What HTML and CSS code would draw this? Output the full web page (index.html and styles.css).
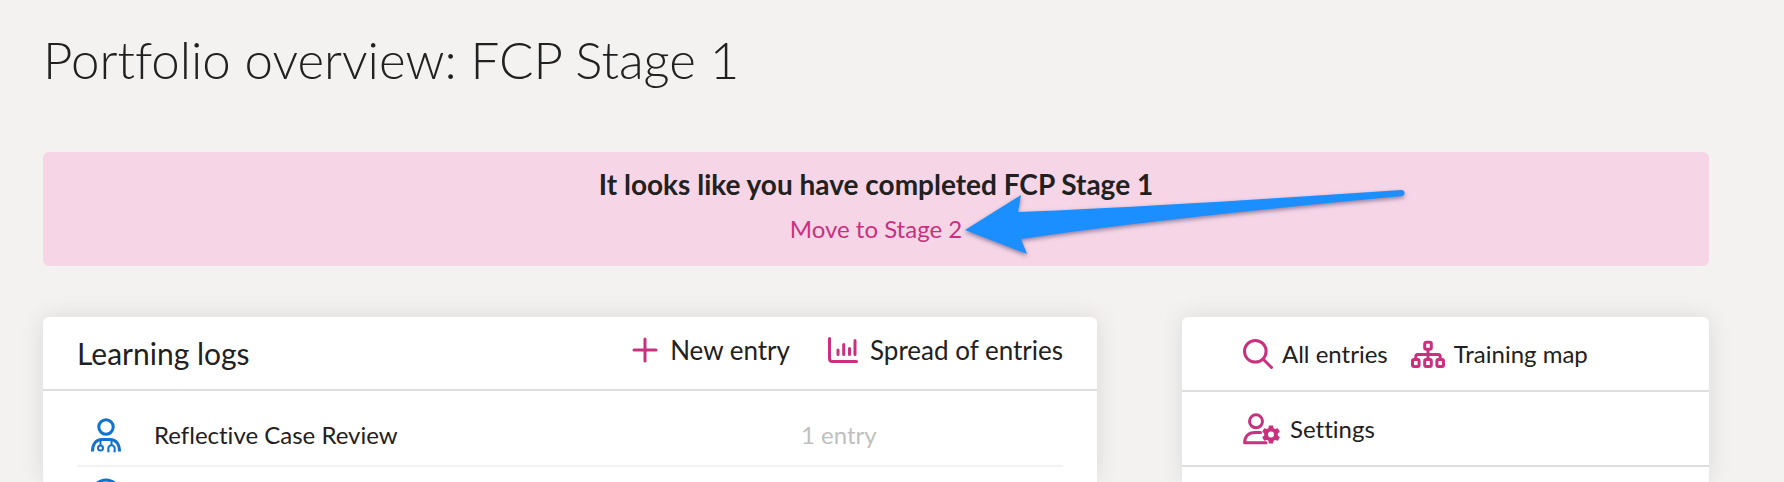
FILE: index.html
```html
<!DOCTYPE html>
<html lang="en">
<head>
<meta charset="utf-8">
<title>Portfolio overview</title>
<link rel="stylesheet" href="styles.css">
</head>
<body>
<main class="page">
  <h1 class="title">Portfolio overview: FCP Stage 1</h1>

  <section class="banner">
    <h2 class="banner-heading">It looks like you have completed FCP Stage 1</h2>
    <div class="banner-action">
      <a class="banner-link" href="#">Move to Stage 2</a>
      <svg class="arrow" width="450" height="80" viewBox="0 0 450 80" aria-hidden="true">
        <path d="M5 45 61 10 58 27Q190 22 441 5A3 3 0 0 1 442 11Q195 34 61 54L67 69Z"/>
      </svg>
    </div>
  </section>

  <div class="columns">
    <section class="card">
      <header class="card-header">
        <h2 class="card-title">Learning logs</h2>
        <nav class="actions">
          <a class="action" href="#">
            <svg class="icon" width="26" height="26" viewBox="0 0 26 26" aria-hidden="true"><path class="line" d="M13 2V24M2 13H24"/></svg>
            New entry
          </a>
          <a class="action" href="#">
            <svg class="icon" width="30" height="26" viewBox="0 0 30 26" aria-hidden="true"><path class="line" d="M1.5 1.5V21.5Q1.5 24.5 4.5 24.5H28.5M10 13V17.5M15.7 7.5V17.5M21.5 11.5V17.5M27 3.5V17.5"/></svg>
            Spread of entries
          </a>
        </nav>
      </header>
      <ul class="logs">
        <li class="log">
          <svg class="log-icon" width="30" height="36" viewBox="0 0 30 36" aria-hidden="true">
            <circle cx="15" cy="10" r="7.2"/>
            <path d="M1.5 34.5C1.5 27 5 22.5 11 22.5H19C25 22.5 28.5 27 28.5 34.5"/>
            <g class="thin"><path d="M9.5 23V28M20.5 23V28M18.5 34.3H17.3V31.5A3.2 3.2 0 0 1 23.7 31.5V34.3H22.5"/><circle cx="9.5" cy="31" r="2.5"/></g>
          </svg>
          <span class="log-name">Reflective Case Review</span>
          <span class="log-count">1 entry</span>
        </li>
        <li class="log">
          <svg class="log-icon" width="30" height="36" viewBox="0 0 30 36" aria-hidden="true"><circle cx="15" cy="15" r="14"/></svg>
        </li>
      </ul>
    </section>

    <aside class="card">
      <nav>
        <div class="side-row">
          <a class="side-link" href="#">
            <svg class="icon" width="30" height="30" viewBox="0 0 30 30" aria-hidden="true"><circle class="line" cx="12.3" cy="12.3" r="10.8"/><path class="line" d="M20 20 28.5 28.5"/></svg>
            All entries
          </a>
          <a class="side-link" href="#">
            <svg class="icon" width="34" height="30" viewBox="0 0 34 30" aria-hidden="true"><g class="line"><rect x="13.7" y="3.3" width="6.6" height="7" rx="1.5"/><rect x="1.5" y="20.5" width="6.6" height="7" rx="1.5"/><rect x="13.7" y="20.5" width="6.6" height="7" rx="1.5"/><rect x="25.9" y="20.5" width="6.6" height="7" rx="1.5"/><path d="M17 10.5V20M4.8 20V17.5Q4.8 15.5 6.8 15.5H27.2Q29.2 15.5 29.2 17.5V20"/></g></svg>
            Training map
          </a>
        </div>
        <div class="side-row">
          <a class="side-link" href="#">
            <svg class="icon" width="38" height="32" viewBox="0 0 38 32" aria-hidden="true">
              <circle class="line" cx="13" cy="8.3" r="6.5"/>
              <path class="line" d="M17.5 19.5H12C5.5 19.5 1.6 23.5 1.6 29.7H23"/>
              <path class="gear" fill-rule="evenodd" d="M26 12.500h4l.6 2.700 1.500.9 2.700-.8 2 3.400-2 1.900v1.800l2 1.900-2 3.400-2.700-.8-1.500.9-.6 2.700h-4l-.6-2.700-1.500-.9-2.700.8-2-3.400 2-1.900v-1.800l-2-1.900 2-3.400 2.700.8 1.500-.9ZM28 18.500a3 3 0 1 0 0 6 3 3 0 0 0 0-6Z"/>
            </svg>
            Settings
          </a>
        </div>
      </nav>
    </aside>
  </div>
</main>
</body>
</html>
```
FILE: styles.css
```css
* {
  box-sizing: border-box;
}

body {
  margin: 0;
  height: 100vh;
  overflow: hidden;
  background: #f3f2f0;
  color: #212121;
  font-family: Lato, "Open Sans", sans-serif;
  font-size: 24px;
  font-variant-ligatures: none;
  line-height: 32px;
}

h1,
h2,
ul {
  margin: 0;
  padding: 0;
}

a {
  color: inherit;
  text-decoration: none;
}

.page {
  display: flex;
  flex-direction: column;
  height: 100%;
  padding: 28px 75px 0 43px;
}

.title {
  margin-bottom: 60px;
  font-size: 51px;
  font-weight: 300;
  line-height: 64px;
}

.banner {
  flex: none;
  padding: 12px 24px 20px;
  margin-bottom: 51px;
  border-radius: 6px;
  background: #f6d5e6;
  text-align: center;
}

.banner-heading {
  margin-bottom: 8px;
  font-size: 28px;
  font-weight: 700;
  line-height: 40px;
}

.banner-action {
  position: relative;
  width: fit-content;
  margin: 0 auto;
}

.banner-link {
  display: block;
  line-height: 34px;
  color: #c9317f;
}

.arrow {
  position: absolute;
  top: -27px;
  left: 100%;
  margin-left: -2px;
  fill: #1b8fff;
  filter: drop-shadow(0 2px 2px rgba(40, 40, 90, 0.5));
}

.columns {
  display: grid;
  grid-template-columns: 2fr 1fr;
  gap: 85px;
  flex: 1;
  min-height: 0;
}

.card {
  min-height: 0;
  border-radius: 6px 6px 0 0;
  background: #fff;
  box-shadow: 0 0 24px rgba(0, 0, 0, 0.1);
}

.card-header {
  display: flex;
  align-items: center;
  justify-content: space-between;
  height: 74px;
  padding: 0 34px;
  border-bottom: 2px solid #dededc;
}

.card-title {
  font-size: 30px;
  font-weight: 400;
}

.actions {
  display: flex;
  gap: 38px;
  padding-bottom: 6px;
  font-size: 26px;
}

.action {
  display: flex;
  align-items: center;
  gap: 12px;
}

.icon {
  flex: none;
}

.line {
  fill: none;
  stroke: #c9317f;
  stroke-width: 3;
  stroke-linecap: round;
  stroke-linejoin: round;
}

.gear {
  fill: #c9317f;
}

.logs {
  padding: 14px 34px 0;
  list-style: none;
}

.log {
  display: grid;
  grid-template-columns: 63px 1fr 262px;
  align-items: center;
  height: 62px;
  padding-left: 14px;
  border-bottom: 2px solid #f2f2f2;
}

.log-icon {
  overflow: visible;
  fill: none;
  stroke: #1272d0;
  stroke-width: 3;
}

.thin {
  stroke-width: 2;
}

.log-count {
  color: #bfbfbf;
}

.side-row {
  display: flex;
  align-items: center;
  gap: 23px;
  height: 75px;
  padding: 0 61px;
  border-bottom: 2px solid #dededc;
}

.side-link {
  display: flex;
  align-items: center;
  gap: 9px;
}
```
